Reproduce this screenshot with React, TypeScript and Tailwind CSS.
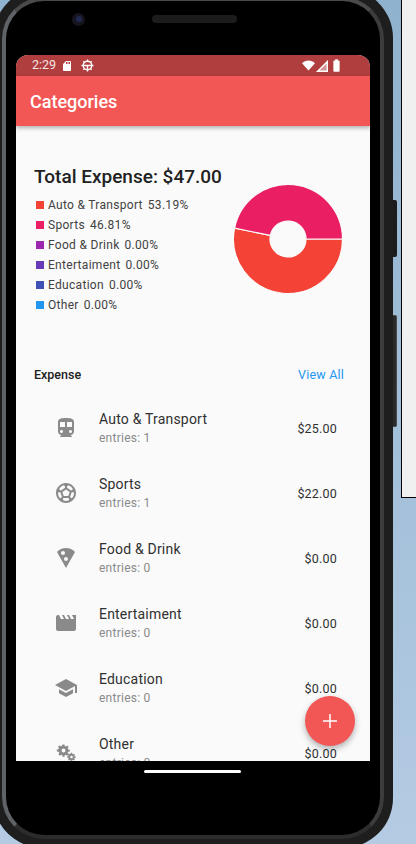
import { MdDirectionsTransit, MdOutlineSportsSoccer, MdLocalPizza, MdMovie, MdSchool, MdSdCard, MdBatteryStd } from "react-icons/md";
import { IconType } from "react-icons";

const legend = [
  { name: "Auto & Transport", pct: "53.19%", color: "bg-[#f44336]" },
  { name: "Sports", pct: "46.81%", color: "bg-[#e91e63]" },
  { name: "Food & Drink", pct: "0.00%", color: "bg-[#9c27b0]" },
  { name: "Entertaiment", pct: "0.00%", color: "bg-[#673ab7]" },
  { name: "Education", pct: "0.00%", color: "bg-[#3f51b5]" },
  { name: "Other", pct: "0.00%", color: "bg-[#2196f3]" },
];

const gear =
  "M8.6 2h2.8l.4 2.3 1.5.7 2-1.3 2 2-1.3 2 .7 1.5 2.3.4v2.6l-2.3.4-.7 1.5 1.3 2-2 2-2-1.3-1.5.7-.4 2.3H8.6l-.4-2.3-1.5-.7-2 1.3-2-2 1.3-2-.7-1.5L.5 12V9.4l2.3-.4.7-1.5-1.3-2 2-2 2 1.3 1.5-.7zM10 8a2.8 2.8 0 1 0 0 5.6A2.8 2.8 0 0 0 10 8z";

function GearsIcon({ className }: { className?: string }) {
  return (
    <svg viewBox="0 0 24 24" className={className} fill="currentColor">
      <path fillRule="evenodd" d={gear} transform="translate(2.5 2) scale(0.7)" />
      <path fillRule="evenodd" d={gear} transform="translate(12.8 10.92) scale(0.47)" />
    </svg>
  );
}

const rows: { name: string; entries: number; amount: string; Icon: IconType | typeof GearsIcon }[] = [
  { name: "Auto & Transport", entries: 1, amount: "$25.00", Icon: MdDirectionsTransit },
  { name: "Sports", entries: 1, amount: "$22.00", Icon: MdOutlineSportsSoccer },
  { name: "Food & Drink", entries: 0, amount: "$0.00", Icon: MdLocalPizza },
  { name: "Entertaiment", entries: 0, amount: "$0.00", Icon: MdMovie },
  { name: "Education", entries: 0, amount: "$0.00", Icon: MdSchool },
  { name: "Other", entries: 0, amount: "$0.00", Icon: GearsIcon },
];

function polar(r: number, deg: number) {
  const a = (deg * Math.PI) / 180;
  return `${(55 + r * Math.cos(a)).toFixed(2)} ${(55 + r * Math.sin(a)).toFixed(2)}`;
}

function slice(from: number, to: number) {
  const large = to - from > 180 ? 1 : 0;
  return `M${polar(18, from)} L${polar(54.5, from)} A54.5 54.5 0 ${large} 1 ${polar(54.5, to)} L${polar(18, to)} A18 18 0 ${large} 0 ${polar(18, from)} Z`;
}

function Pie() {
  const split = 53.19 * 3.6;
  return (
    <svg viewBox="0 0 110 110" className="w-[110px] h-[110px] shrink-0">
      <path d={slice(0, split)} fill="#f44336" stroke="#fafafa" strokeWidth="1.2" />
      <path d={slice(split, 360)} fill="#e91e63" stroke="#fafafa" strokeWidth="1.2" />
    </svg>
  );
}

function StatusBar() {
  return (
    <div className="h-[21px] shrink-0 bg-[#b03e3e] flex items-center pl-[16px] pr-[26px] text-white">
      <span className="text-[12.5px] leading-none text-[#f4e4e4] w-[27px]">2:29</span>
      <MdSdCard className="w-[12px] h-[12px] ml-[2px]" />
      <svg viewBox="0 0 14 14" className="w-[13px] h-[13px] ml-[8px]" fill="none" stroke="currentColor" strokeWidth="1.5">
        <circle cx="7" cy="7" r="4.6" />
        <path d="M2.4 7h9.2M7 7v4.6M7 .6v2M.6 7h2M11.4 7h2M2.5 2.5l1.3 1.3M11.5 2.5l-1.3 1.3M2.5 11.5l1.3-1.3M11.5 11.5l-1.3-1.3M7 11.4v2" />
      </svg>
      <div className="flex-1" />
      <svg viewBox="0 0 14 11" className="w-[13px] h-[11px]" fill="currentColor"><path d="M0 3.2C4-.9 10-.9 14 3.2L7 11z" /></svg>
      <svg viewBox="0 0 12 12" className="w-[12px] h-[12px] ml-[1px]"><path d="M12 0v12H0z" fill="#fff" fillOpacity="0.45" /><path d="M12 0v12H0zM10.6 3.4 3.4 10.6h7.2z" fill="#fff" fillRule="evenodd" /></svg>
      <MdBatteryStd className="w-[15px] h-[15px] ml-[1px]" />
    </div>
  );
}

function Screen() {
  return (
    <div className="relative w-[354px] h-[706px] shrink-0 overflow-hidden rounded-t-[12px] bg-[#fafafa] flex flex-col font-['Roboto',sans-serif]">
      <StatusBar />
      <div className="h-[50px] shrink-0 bg-[#f25755] shadow-[0_2px_4px_rgba(0,0,0,0.3)] flex items-center px-[14px] pt-[2px] z-10">
        <h1 className="text-white text-[18px] font-medium leading-none">Categories</h1>
      </div>

      <div className="flex items-start pl-[18px] pr-[27px] pt-[40px] shrink-0">
        <div className="flex-1">
          <h2 className="text-[19px] font-medium leading-[22px] text-[#212121]">Total Expense: $47.00</h2>
          <ul className="mt-[7px]">
            {legend.map((l) => (
              <li key={l.name} className="flex items-center h-[20px] text-[12px] text-[#424242] tracking-[0.3px]">
                <span className={`w-[8px] h-[8px] ml-[2px] mr-[4px] ${l.color}`} />
                <span>{l.name}</span>
                <span className="ml-[5px]">{l.pct}</span>
              </li>
            ))}
          </ul>
        </div>
        <div className="mt-[18px]"><Pie /></div>
      </div>

      <div className="flex items-center justify-between pl-[18px] pr-[26px] mt-[50px] h-[20px] shrink-0">
        <span className="text-[12.5px] font-medium text-[#212121]">Expense</span>
        <span className="text-[12.5px] text-[#2196f3] tracking-[0.2px]">View All</span>
      </div>

      <div className="mt-[10px] shrink-0">
        {rows.map((r) => (
          <div key={r.name} className="h-[65px] flex items-center pl-[38px] pr-[33px]">
            <r.Icon className="w-6 h-6 text-[#8a8a8a] shrink-0" />
            <div className="ml-[21px] flex-1">
              <p className="text-[14px] leading-[20px] tracking-[0.2px] text-[#303030]">{r.name}</p>
              <p className="text-[12px] leading-[18px] tracking-[0.25px] text-[#8a8a8a]">entries: {r.entries}</p>
            </div>
            <span className="mt-[4px] text-[12.5px] text-[#303030] tracking-[0.2px]">{r.amount}</span>
          </div>
        ))}
      </div>

      <button className="absolute right-[15px] bottom-[15px] w-[50px] h-[50px] rounded-full bg-[#f25755] shadow-[0_3px_6px_rgba(0,0,0,0.3)] flex items-center justify-center z-20">
        <svg viewBox="0 0 14 14" className="w-[14px] h-[14px]" stroke="#fff" strokeWidth="1.5"><path d="M7 0v14M0 7h14" /></svg>
      </button>
    </div>
  );
}

export default function App() {
  return (
    <div className="relative w-[416px] h-[844px] overflow-hidden flex items-start bg-gradient-to-b from-[#8fb2ce] to-[#b4cbe3]">
      <div className="relative -ml-[7px] -mt-[12px] w-[400px] h-[860px] shrink-0 rounded-[50px] bg-[#1e1e1e] p-[9px]">
        <div className="h-full rounded-[42px] border-[4px] border-l-[#5f6367] border-r-[#3c3c3c] border-t-[#4a4a4a] border-b-[#2c2c2c] bg-black flex flex-col items-center overflow-hidden">
          <div className="w-full h-[54px] pb-[18px] shrink-0 flex items-center">
            <span className="ml-[66px] w-[13px] h-[13px] rounded-full bg-[#15151f] flex items-center justify-center">
              <span className="w-[6px] h-[6px] rounded-full bg-[#20284f]" />
            </span>
            <span className="ml-[67px] w-[85px] h-[8px] rounded-full bg-[#1c1c1c]" />
          </div>
          <Screen />
          <div className="w-[97px] h-[3px] mt-[9px] ml-[-1px] shrink-0 bg-white rounded-full" />
        </div>
        <span className="absolute top-[212px] -right-[4px] w-[4px] h-[57px] bg-[#1c1c1c] rounded-r-[2px]" />
        <span className="absolute top-[327px] -right-[4px] w-[4px] h-[112px] bg-[#2a2a2a] border border-[#4a4a4a] border-l-0 rounded-r-[2px]" />
      </div>
      <div className="ml-[8px] w-[15px] h-[498px] shrink-0 bg-[#f0f0f0] border-l border-b border-black" />
    </div>
  );
}
